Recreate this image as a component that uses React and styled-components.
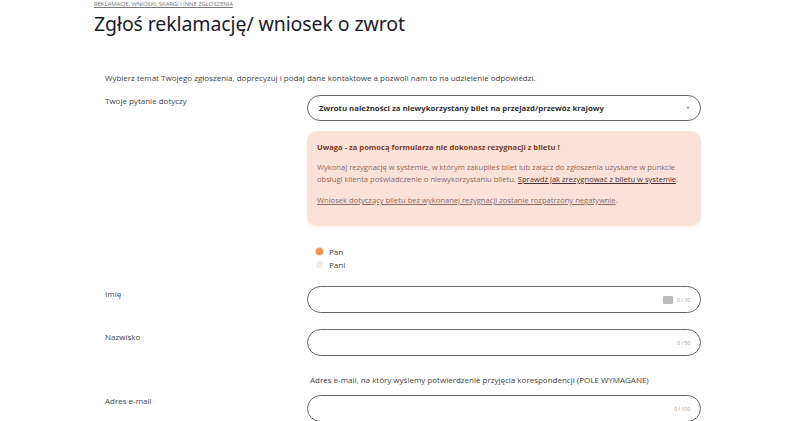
import React from 'react';
import styled, { createGlobalStyle } from 'styled-components';

const Global = createGlobalStyle`
  body {
    margin: 0;
    background: #fff;
    font-family: "Open Sans", "Noto Sans", sans-serif;
    color: #333;
  }
`;

const Page = styled.div`
  width: 800px;
  height: 421px;
  overflow: hidden;
  padding-left: 94px;
  box-sizing: border-box;
`;

const Breadcrumb = styled.a`
  display: block;
  font-size: 6px;
  line-height: 8px;
  color: #777;
  text-decoration: underline;
  text-transform: uppercase;
  letter-spacing: -0.1px;
`;

const Title = styled.h1`
  margin: 3px 0 0;
  font-family: "Noto Sans", "Open Sans", sans-serif;
  font-weight: 400;
  font-size: 19.5px;
  line-height: 26px;
  color: #1b1b2f;
  letter-spacing: -0.1px;
`;

const Form = styled.div`
  padding-left: 11px;
  margin-top: 35px;
  width: 596px;
`;

const Intro = styled.p`
  margin: 0;
  font-size: 8px;
  line-height: 12px;
  color: #444;
`;

const Row = styled.div`
  display: grid;
  grid-template-columns: 202px 394px;
  margin-top: ${p => p.$top || 0}px;
`;

const Label = styled.div`
  font-size: 8px;
  line-height: 12px;
  color: #444;
  padding-top: ${p => p.$pad ?? 2}px;
`;

const Select = styled.div`
  height: 26px;
  box-sizing: border-box;
  border: 1px solid #666;
  border-radius: 13px;
  display: flex;
  align-items: center;
  justify-content: space-between;
  padding: 0 10px 0 11px;
  font-size: 7.8px;
  font-weight: 700;
  color: #333;
`;

const Caret = styled.span`
  width: 0;
  height: 0;
  border-left: 2.5px solid transparent;
  border-right: 2.5px solid transparent;
  border-top: 2.5px solid #999;
`;

const Alert = styled.div`
  margin-top: 10px;
  background: #fbe2d8;
  border-radius: 10px;
  padding: 10px 12px 12px 10px;
  height: 95px;
  box-sizing: border-box;
  box-shadow: 0 1px 3px rgba(0, 0, 0, 0.06);
`;

const AlertTitle = styled.div`
  font-size: 7.6px;
  line-height: 12px;
  font-weight: 700;
  color: #7c3a22;
`;

const AlertText = styled.p`
  margin: ${p => p.$gap ?? 9}px 0 0;
  font-size: 7.6px;
  line-height: 12px;
  color: #8a6c64;
`;

const Link = styled.a`
  color: #4c2f35;
  text-decoration: underline;
`;

const Muted = styled.a`
  color: #8a6c64;
  text-decoration: underline;
`;

const Radios = styled.div`
  margin-top: 20px;
  padding-left: 9px;
  display: flex;
  flex-direction: column;
  gap: 2px;
`;

const RadioRow = styled.label`
  display: flex;
  align-items: center;
  gap: 6px;
  font-size: 8px;
  line-height: 11px;
  color: #444;
`;

const Dot = styled.span`
  width: 7px;
  height: 7px;
  border-radius: 50%;
  background: ${p => (p.$on ? '#ea9456' : '#ececec')};
  box-shadow: ${p => (p.$on ? '0 0 0 1px #f8d6bd' : 'none')};
`;

const Input = styled.div`
  height: 27px;
  box-sizing: border-box;
  border: 1px solid #666;
  border-radius: 13.5px;
  display: flex;
  align-items: center;
  justify-content: flex-end;
  gap: 4px;
  padding-right: 10px;
`;

const Counter = styled.span`
  font-size: 5px;
  color: #999;
`;

const KeyIcon = styled.span`
  width: 10px;
  height: 8px;
  background: #bbb;
  border-radius: 1px;
`;

const Helper = styled.div`
  font-size: 8px;
  line-height: 12px;
  color: #444;
  padding-left: 3px;
  margin-top: 18px;
`;

export default function App() {
  return (
    <>
      <Global />
      <Page>
        <Breadcrumb>Reklamacje, wnioski, skargi i inne zgłoszenia</Breadcrumb>
        <Title>Zgłoś reklamację/ wniosek o zwrot</Title>
        <Form>
          <Intro>
            Wybierz temat Twojego zgłoszenia, doprecyzuj i podaj dane kontaktowe a pozwoli nam to na udzielenie odpowiedzi.
          </Intro>
          <Row $top={11}>
            <Label $pad={0}>Twoje pytanie dotyczy</Label>
            <div>
              <Select>
                <span>Zwrotu należności za niewykorzystany bilet na przejazd/przewóz krajowy</span>
                <Caret />
              </Select>
              <Alert>
                <AlertTitle>Uwaga - za pomocą formularza nie dokonasz rezygnacji z biletu !</AlertTitle>
                <AlertText $gap={8}>
                  Wykonaj rezygnację w systemie, w którym zakupiłeś bilet lub załącz do zgłoszenia uzyskane w punkcie
                  obsługi klienta poświadczenie o niewykorzystaniu biletu.{' '}
                  <Link>Sprawdź jak zrezygnować z biletu w systemie</Link>.
                </AlertText>
                <AlertText>
                  <Muted>Wniosek dotyczący biletu bez wykonanej rezygnacji zostanie rozpatrzony negatywnie</Muted>.
                </AlertText>
              </Alert>
              <Radios>
                <RadioRow><Dot $on />Pan</RadioRow>
                <RadioRow><Dot />Pani</RadioRow>
              </Radios>
            </div>
          </Row>
          <Row $top={16}>
            <Label $pad={2}>Imię</Label>
            <Input>
              <KeyIcon />
              <Counter>0 / 30</Counter>
            </Input>
          </Row>
          <Row $top={16}>
            <Label $pad={2}>Nazwisko</Label>
            <Input>
              <Counter>0 / 50</Counter>
            </Input>
          </Row>
          <Row>
            <div />
            <Helper>Adres e-mail, na który wyślemy potwierdzenie przyjęcia korespondencji (POLE WYMAGANE)</Helper>
          </Row>
          <Row $top={9}>
            <Label $pad={0}>Adres e-mail</Label>
            <Input>
              <Counter>0 / 100</Counter>
            </Input>
          </Row>
        </Form>
      </Page>
    </>
  );
}
